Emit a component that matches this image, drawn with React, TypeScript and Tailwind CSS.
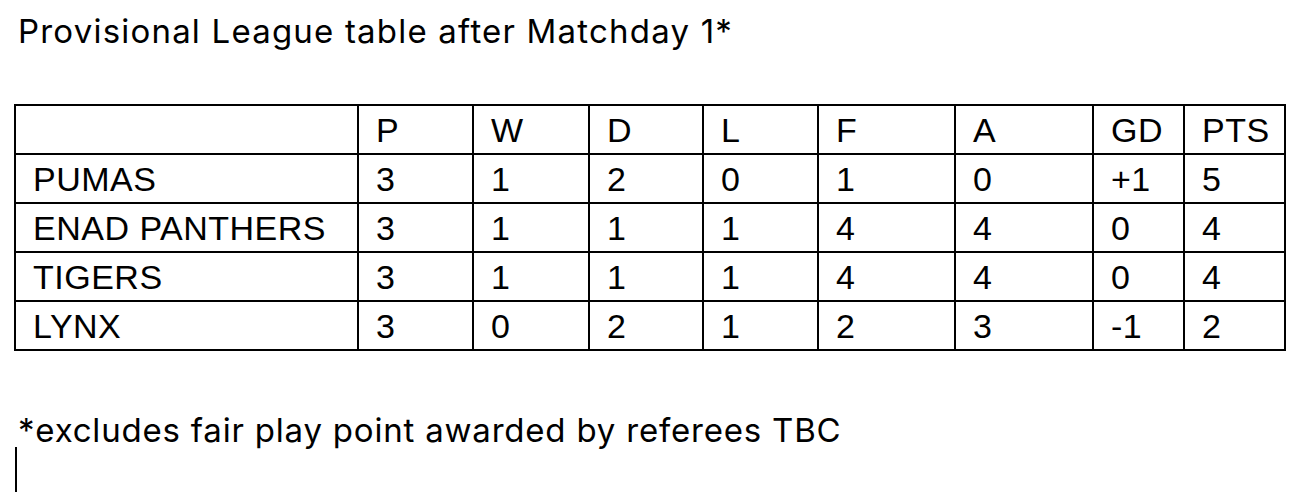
import React from "react";

type Row = {
  team: string;
  p: number;
  w: number;
  d: number;
  l: number;
  f: number;
  a: number;
  gd: string;
  pts: number;
};

// standings after matchday 1 (provisional)
const rows: Row[] = [
  { team: "PUMAS", p: 3, w: 1, d: 2, l: 0, f: 1, a: 0, gd: "+1", pts: 5 },
  { team: "ENAD PANTHERS", p: 3, w: 1, d: 1, l: 1, f: 4, a: 4, gd: "0", pts: 4 },
  { team: "TIGERS", p: 3, w: 1, d: 1, l: 1, f: 4, a: 4, gd: "0", pts: 4 },
  { team: "LYNX", p: 3, w: 0, d: 2, l: 1, f: 2, a: 3, gd: "-1", pts: 2 },
];

const headers = ["", "P", "W", "D", "L", "F", "A", "GD", "PTS"];

const cell = "border-2 border-black h-[49px] pl-[17px] pr-1 py-0 text-left align-middle leading-none";

const App = () => {
  return (
    <div className="w-[1310px] h-[492px] bg-white overflow-hidden text-black">
      <div className="h-[104px] pl-[18px] pt-[15px]">
        <p className="text-[33px] leading-none tracking-[1.2px] font-['Inter',sans-serif]">
          Provisional League table after Matchday 1*
        </p>
      </div>

      <div className="pl-[14px]">
        <table className="table-fixed border-collapse w-[1270px] font-['Liberation_Sans',Arial,sans-serif] text-[34px] tracking-[0.5px]">
          <colgroup>
            <col className="w-[343px]" />
            <col className="w-[115px]" />
            <col className="w-[116px]" />
            <col className="w-[114px]" />
            <col className="w-[115px]" />
            <col className="w-[137px]" />
            <col className="w-[138px]" />
            <col className="w-[91px]" />
            <col className="w-[101px]" />
          </colgroup>
          <thead>
            <tr>
              {headers.map((h, i) => (
                <th key={i} className={`${cell} font-normal`}>
                  {h}
                </th>
              ))}
            </tr>
          </thead>
          <tbody>
            {rows.map((r) => (
              <tr key={r.team}>
                <td className={cell}>{r.team}</td>
                <td className={cell}>{r.p}</td>
                <td className={cell}>{r.w}</td>
                <td className={cell}>{r.d}</td>
                <td className={cell}>{r.l}</td>
                <td className={cell}>{r.f}</td>
                <td className={cell}>{r.a}</td>
                <td className={cell}>{r.gd}</td>
                <td className={cell}>{r.pts}</td>
              </tr>
            ))}
          </tbody>
        </table>
      </div>

      <p className="pl-[18px] pt-[63px] text-[33px] leading-none tracking-[0.8px] font-['Inter',sans-serif]">
        *excludes fair play point awarded by referees TBC
      </p>
      {/* text cursor */}
      <div className="ml-[15px] w-[2px] h-[46px] bg-black" />
    </div>
  );
};

export default App;
